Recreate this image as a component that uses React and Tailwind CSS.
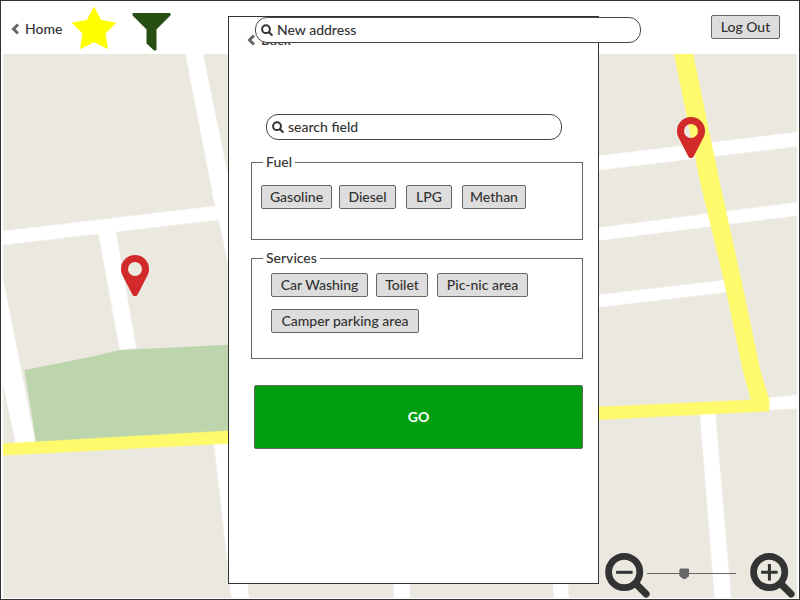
import React from "react";

const fuels = [
  { label: "Gasoline", size: "w-[71px] mr-[7px]" },
  { label: "Diesel", size: "w-[57px] mr-2.5" },
  { label: "LPG", size: "w-[46px] mr-2.5" },
  { label: "Methan", size: "w-[64px]" },
];

const services = [
  { label: "Car Washing", size: "w-[97px] mr-2" },
  { label: "Toilet", size: "w-[52px] mr-[9px]" },
  { label: "Pic-nic area", size: "w-[91px] mr-4" },
  { label: "Camper parking area", size: "w-[148px]" },
];

function Chevron() {
  return (
    <svg className="h-3 w-2 shrink-0" viewBox="0 0 8 12" fill="none" stroke="#666" strokeWidth="3" aria-hidden="true">
      <path d="M7 1.5 2.5 6 7 10.5" />
    </svg>
  );
}

function Chip({ label, size = "" }) {
  return (
    <button
      type="button"
      className={"h-6 whitespace-nowrap rounded-xs border border-[#666] bg-[#ddd] text-center leading-[22px] " + size}
    >
      {label}
    </button>
  );
}

function SearchBox({ id, label, className }) {
  return (
    <label
      htmlFor={id}
      className={"flex h-[26px] items-center gap-1 rounded-xl border border-[#444] bg-white pl-[5px] pr-3 " + className}
    >
      <svg className="h-3 w-3 shrink-0" viewBox="0 0 12 12" fill="none" stroke="#333" strokeWidth="2" aria-hidden="true">
        <circle cx="5" cy="5.2" r="3.9" />
        <path d="m8 8.2 2.8 2.8" strokeLinecap="round" />
      </svg>
      <input
        id={id}
        type="text"
        placeholder={label}
        aria-label={label}
        className="min-w-0 flex-1 bg-transparent leading-[18px] outline-none placeholder:text-[#333] placeholder:opacity-100"
      />
    </label>
  );
}

function Pin({ className, label }) {
  return (
    <button type="button" aria-label={label} className={"absolute h-[42px] w-7 " + className}>
      <svg className="h-[42px] w-7" viewBox="0 0 28 42" aria-hidden="true">
        <path
          fill="#d22a2a"
          fillRule="evenodd"
          d="M14 0A14 14 0 0 0 0 14c0 2.200.4 4.200 1.300 6l10 19.500c1.100 2.100 4.300 2.100 5.400 0l10-19.500c.9-1.800 1.300-3.800 1.300-6A14 14 0 0 0 14 0Zm0 7a7 7 0 1 1 0 14 7 7 0 0 1 0-14Z"
        />
      </svg>
    </button>
  );
}

function Zoom({ plus, label }) {
  return (
    <button type="button" aria-label={label} className="h-[42px] w-[42px] shrink-0">
      <svg className="h-[42px] w-[42px] overflow-visible" viewBox="-0.600 0 42 42" fill="none" stroke="#333" aria-hidden="true">
        <circle cx="18.600" cy="20" r="15.600" strokeWidth="6.800" />
        <path d="m30.500 32 10 10" strokeWidth="7" strokeLinecap="round" />
        <path d={plus ? "M10.500 20.300h16.500M18.800 12v16.500" : "M10.500 20.300h16.500"} strokeWidth="3" />
      </svg>
    </button>
  );
}

function StreetMap() {
  return (
    <svg
      className="absolute inset-0 h-full w-full"
      viewBox="3 54 794 544"
      preserveAspectRatio="xMinYMin slice"
      aria-hidden="true"
    >
      <rect x="0" y="50" width="800" height="550" fill="#ebe8e0" />
      <g fill="#fff" stroke="#fff" strokeOpacity="0.4" strokeWidth="1.500">
        <path d="M185 50 202 50 240 235 240 320 219 219 214 200Z" />
        <path d="M0 231.500 217 206 232 206 232 218 0 245Z" />
        <path d="M98 230 115 228 136 348 120 350Z" />
        <path d="M0 265 3 280 35 442 16 444 0 368Z" />
        <path d="M214 442 232 441 249 600 232 600Z" />
        <path d="M394 580H409L410 600H394Z" />
        <path d="M553 580H567L569 600H554Z" />
        <path d="M590 157 800 132V146L590 171Z" />
        <path d="M590 229 800 202V215L590 241.500Z" />
        <path d="M590 296 727 280V292L590 308Z" />
        <path d="M766 398 800 395V408L766 410Z" />
        <path d="M700 412H715L731 600H715Z" />
      </g>
      <path fill="#bcd5ad" d="M24.500 370 60 363 95 356 120 350 235 344.500V432L36 442Z" />
      <g fill="#fffa6b" stroke="#fffa6b" strokeOpacity="0.4" strokeWidth="1.500">
        <path d="M0 444 235 430.500V443L0 455.500Z" />
        <path d="M673.500 50H692L719 180 741 280 760 370 769 400V411L590 420V407.500L751 400 743 370 724 280 700 180Z" />
      </g>
    </svg>
  );
}

export default function App() {
  return (
    <div className="relative min-h-screen border border-[#333] bg-white font-['Lato','Liberation_Sans',sans-serif] text-[14px] font-medium leading-[18px] text-[#333]">
      <div className="flex min-h-[598px] flex-col">
        <header className="relative flex h-[53px] shrink-0 items-start">
          <nav className="flex w-[254px] shrink-0 items-start pt-1">
            <a href="#home" className="ml-2.5 mt-[15px] flex w-[60px] items-center gap-1.5">
              <Chevron />
              Home
            </a>
            <button type="button" aria-label="Favourites" className="h-12 w-12">
              <svg className="h-12 w-12" viewBox="71 5 48 48" fill="#ff0" stroke="#ff0" strokeLinejoin="round" aria-hidden="true">
                <path d="m94 7.500 7 13 14.500 2.500L105 33.500 107.500 48.500 94 41.700 80.500 48.500 83 33.500 72.500 23 87 20.500Z" />
              </svg>
            </button>
            <button type="button" aria-label="Filter" className="ml-3 h-12 w-10">
              <svg className="h-12 w-10" viewBox="130.500 5 40 48" fill="#274e13" stroke="#274e13" strokeWidth="2" strokeLinejoin="round" aria-hidden="true">
                <path d="M133 14H169V15L155 29V49.500H154L147 43V29L133 15Z" />
              </svg>
            </button>
          </nav>
          <SearchBox id="address" label="New address" className="z-20 mt-4 w-[386px]" />
          <div className="ml-auto mr-[19px] mt-3.5 flex">
            <Chip label="Log Out" size="w-[69px]" />
          </div>
        </header>

        <main className="relative mx-0.5 mb-px flex-1 overflow-hidden">
          <StreetMap />
          <Pin label="Station west" className="left-[118px] top-[201px]" />
          <Pin label="Station east" className="left-[674px] top-[63px]" />
          <div className="absolute bottom-1 right-[5px] flex items-center">
            <Zoom label="Zoom out" />
            <input
              type="range"
              aria-label="Zoom level"
              min="0"
              max="100"
              defaultValue="41"
              className="mr-3.5 h-3 w-[89px] appearance-none bg-[linear-gradient(#666,#666)] bg-[length:100%_1px] bg-center bg-no-repeat [&::-webkit-slider-thumb]:h-3 [&::-webkit-slider-thumb]:w-2.5 [&::-webkit-slider-thumb]:appearance-none [&::-webkit-slider-thumb]:bg-[#666] [&::-webkit-slider-thumb]:[clip-path:polygon(10%_12%,90%_12%,100%_22%,100%_75%,60%_100%,40%_100%,0_75%,0_22%)]"
            />
            <Zoom plus label="Zoom in" />
          </div>
        </main>
      </div>

      <section
        role="dialog"
        aria-label="Filter stations"
        className="absolute inset-y-[15px] left-[227px] z-10 w-[371px] border border-[#333] bg-white pl-[22px] pr-[15px]"
      >
        <a href="#back" className="-ml-1 mt-3.5 flex w-16 items-center gap-1.5">
          <Chevron />
          Back
        </a>
        <SearchBox id="search" label="search field" className="ml-[15px] mt-[65px] w-[296px]" />

        <fieldset className="mt-[13px] h-[87px] border border-[#666] pl-[9px]">
          <legend className="ml-0.5 px-[3px]">Fuel</legend>
          <div className="flex pt-3.5">
            {fuels.map((f) => (
              <Chip key={f.label} {...f} />
            ))}
          </div>
        </fieldset>

        <fieldset className="mt-[9px] h-[110px] border border-[#666] pl-[19px]">
          <legend className="-ml-2 px-[3px]">Services</legend>
          <div className="flex flex-wrap gap-y-3 pt-1.5">
            {services.map((s) => (
              <Chip key={s.label} {...s} />
            ))}
          </div>
        </fieldset>

        <button
          type="button"
          className="ml-[3px] mt-[26px] block h-16 w-[329px] rounded-xs border border-[#666] bg-[#009e0f] text-center font-bold text-white"
        >
          GO
        </button>
      </section>
    </div>
  );
}
